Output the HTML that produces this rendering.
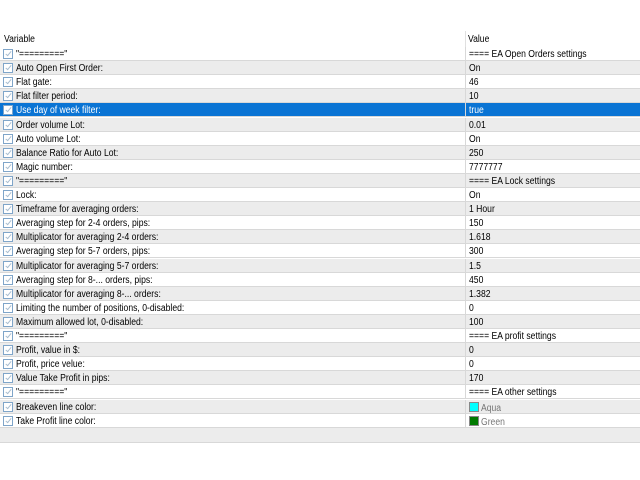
<!DOCTYPE html>
<html><head><style>
body{margin:0;width:640px;height:480px;background:#fff;font-family:"Liberation Sans",sans-serif;font-size:10px;color:#000;position:relative;overflow:hidden}
.hdr{position:absolute;top:31px;left:0;width:640px;height:16px}
.hdr span{position:absolute;top:3px;transform:scaleX(0.86);transform-origin:left}
.row{position:absolute;left:0;width:640px;height:14px;border-bottom:1px solid #d8d8d8;box-sizing:border-box}
.g{background:#ececec}
.sel{background:#0a74d4;color:#fff}
.cb{position:absolute;left:3px;top:2px;width:10px;height:10px;border:1px solid #7fa5c9;background:#fff;box-sizing:border-box}
.cb:after{content:"";position:absolute;left:3px;top:0px;width:2px;height:5px;border:solid #a8bdd0;border-width:0 1px 1px 0;transform:rotate(40deg)}
.n{position:absolute;left:16px;top:2px;white-space:nowrap;transform:scaleX(0.86);transform-origin:left}
.v{position:absolute;left:465px;top:0;height:13px;border-left:1px solid #d8d8d8;padding-left:3px;padding-top:2px;box-sizing:border-box;white-space:nowrap}
.v i{font-style:normal;display:inline-block;transform:scaleX(0.86);transform-origin:left}
.sw{display:inline-block;width:10px;height:10px;vertical-align:-1px;margin-right:2px;border:1px solid #888;box-sizing:border-box}
</style></head><body>
<div class="hdr"><span style="left:4px">Variable</span><span style="left:468px">Value</span><div style="position:absolute;left:465px;top:0;height:16px;border-left:1px solid #e0e0e0"></div></div>
<div id="t"></div>
<script>
var r=[["\"=========\"","==== EA Open Orders settings"],["Auto Open First Order:","On"],["Flat gate:","46"],["Flat filter period:","10"],["Use day of week filter:","true"],["Order volume Lot:","0.01"],["Auto volume Lot:","On"],["Balance Ratio for Auto Lot:","250"],["Magic number:","7777777"],["\"=========\"","==== EA Lock settings"],["Lock:","On"],["Timeframe for averaging orders:","1 Hour"],["Averaging step for 2-4 orders, pips:","150"],["Multiplicator for averaging 2-4 orders:","1.618"],["Averaging step for 5-7 orders, pips:","300"],["Multiplicator for averaging 5-7 orders:","1.5"],["Averaging step for 8-... orders, pips:","450"],["Multiplicator for averaging 8-... orders:","1.382"],["Limiting the number of positions, 0-disabled:","0"],["Maximum allowed lot, 0-disabled:","100"],["\"=========\"","==== EA profit settings"],["Profit, value in $:","0"],["Profit, price velue:","0"],["Value Take Profit in pips:","170"],["\"=========\"","==== EA other settings"],["Breakeven line color:","<span class='sw' style='background:#0ff'></span><i style='color:#777'>Aqua</i>"],["Take Profit line color:","<span class='sw' style='background:#007a00'></span><i style='color:#777'>Green</i>"]];
var h="";
for(var i=0;i<r.length;i++){var y=47+i*14.1;var c=i==4?"sel":(i%2?"g":"");
var v=r[i][1].indexOf("<")<0?"<i>"+r[i][1]+"</i>":r[i][1];
h+='<div class="row '+c+'" style="top:'+y.toFixed(1)+'px"><div class="cb"></div><span class="n">'+r[i][0]+'</span><div class="v">'+v+'</div></div>';}
h+='<div class="row g" style="top:'+(47+27*14.1).toFixed(1)+'px;height:15px"></div>';
document.getElementById("t").innerHTML=h;
</script>
</body></html>
